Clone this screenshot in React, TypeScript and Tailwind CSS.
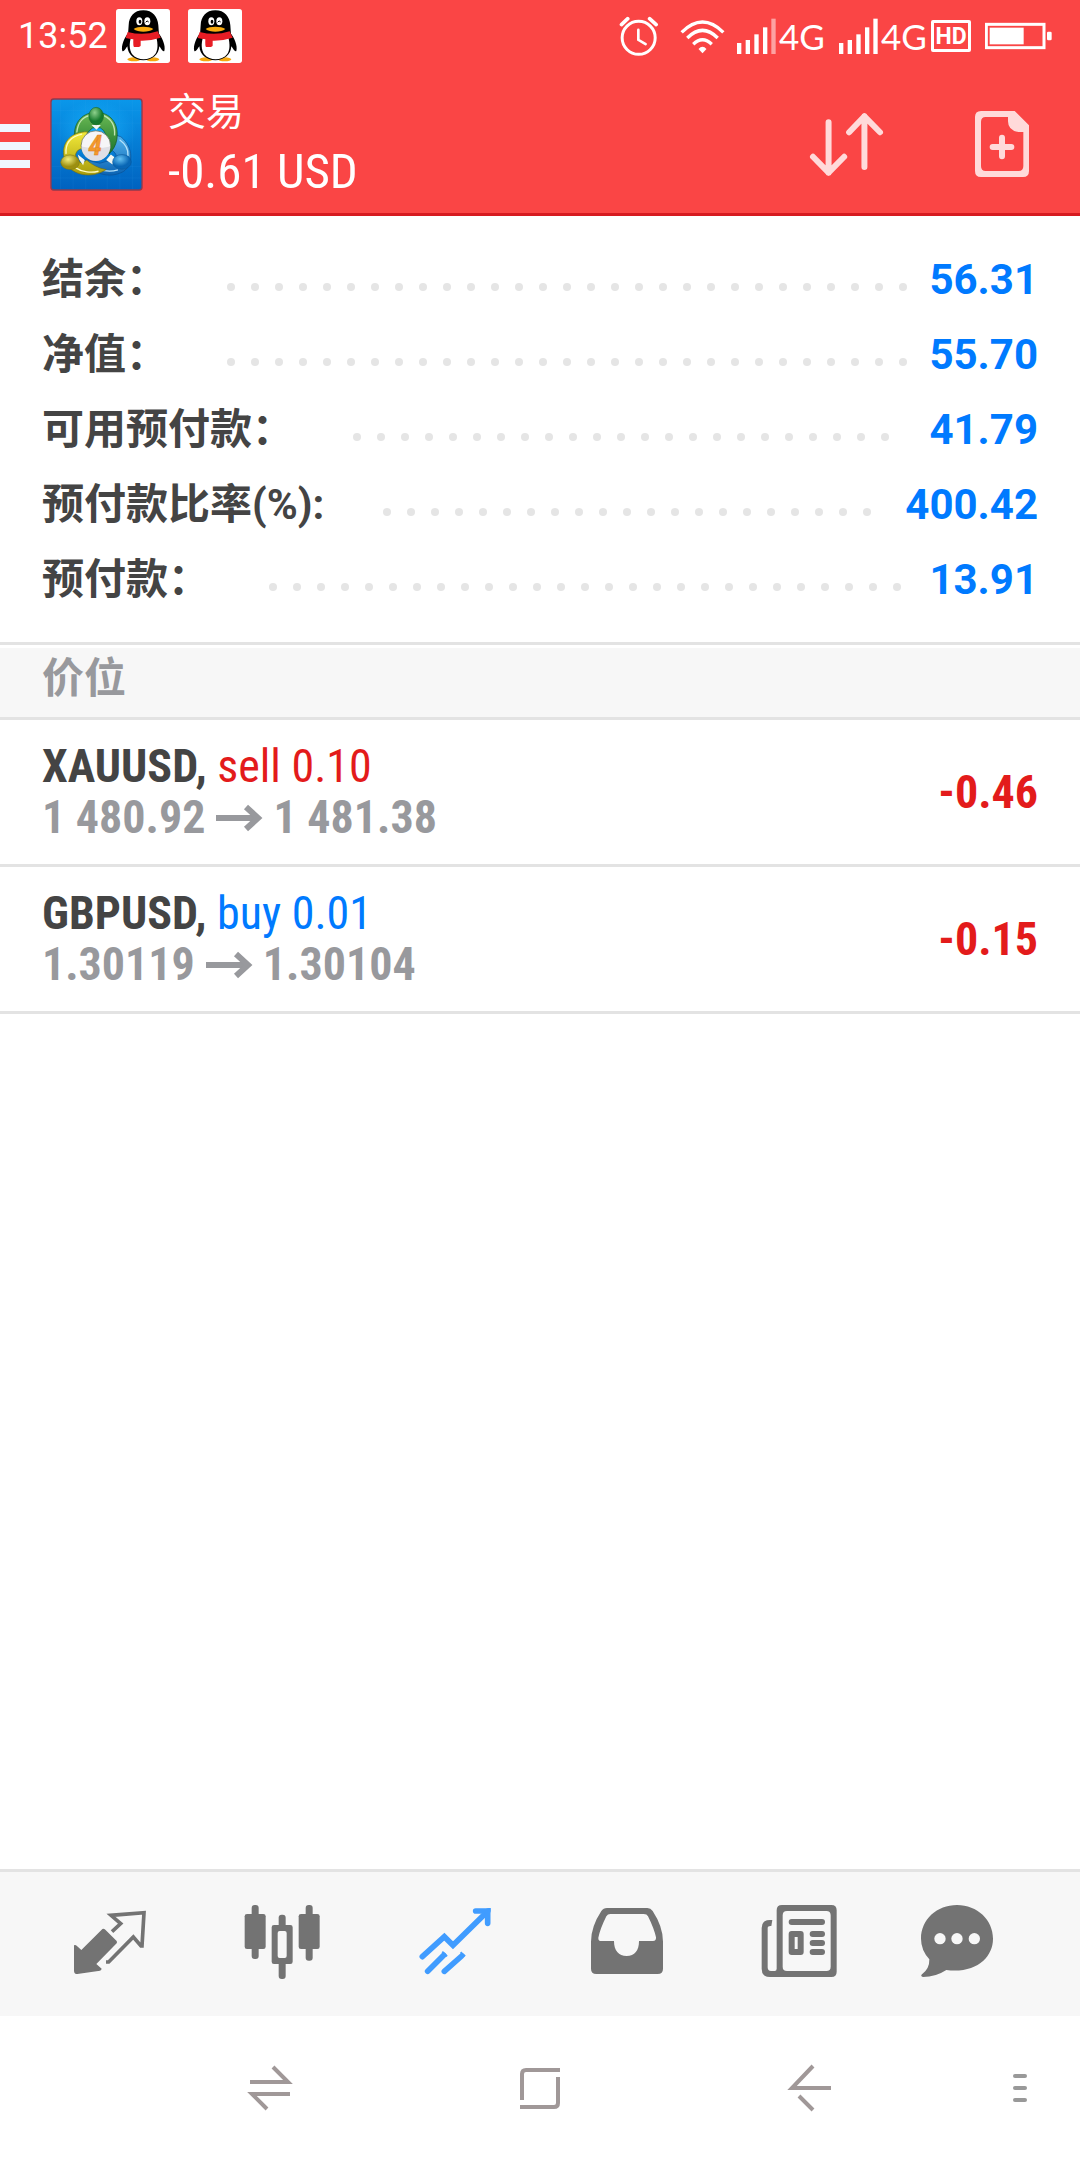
import React from "react";

const cjk = "font-['Roboto','Noto_Sans_CJK_SC',sans-serif]";
const condensed = "font-['Roboto_Condensed','Roboto',sans-serif]";

function Penguin() {
  return (
    <svg viewBox="348 27 162 162" className="size-[54px] shrink-0" aria-label="QQ">
      <rect x="348" y="27" width="162" height="162" rx="8" fill="#fff" />
      <ellipse cx="402" cy="178" rx="20" ry="6" fill="#f6a80f" />
      <ellipse cx="458" cy="178" rx="20" ry="6" fill="#f6a80f" />
      <path d="M384 100 C374 112 362 138 367 153 C371 157 377 146 382 139 C384 164 402 180 430 181 C458 180 476 164 478 139 C483 146 489 157 493 153 C498 138 486 112 476 100 Z" fill="#000" />
      <path d="M430 31 C402 31 387 50 386 76 L384 104 L477 104 L475 76 C473 50 458 31 430 31 Z" fill="#000" />
      <path d="M393 112 C387 132 388 150 396 162 C405 173 418 178 431 178 C444 178 457 173 466 162 C474 150 474 132 469 112 Z" fill="#fff" />
      <path d="M383 96 Q430 108 473 94 L482 113 Q450 123 422 122 V137 Q421 140 416 141 L402 141 Q399 139 400 118 Q388 117 377 114 Z" fill="#e71d25" />
      <ellipse cx="418" cy="64" rx="9" ry="12" fill="#fff" />
      <ellipse cx="442" cy="64" rx="9" ry="12" fill="#fff" />
      <ellipse cx="420" cy="65" rx="4" ry="6" fill="#000" />
      <path d="M437 67 Q441 59 446 66" fill="none" stroke="#000" strokeWidth="3" />
      <path d="M401 87 C412 78 448 78 460 87 C448 97 414 98 401 87 Z" fill="#f9ab10" />
    </svg>
  );
}

function AppLogo() {
  return (
    <svg viewBox="29 23 278 278" className="ml-5 size-[93px] shrink-0" aria-label="MetaTrader 4">
      <defs>
        <linearGradient id="sky" x1="0" y1="0" x2="0" y2="1">
          <stop offset="0" stopColor="#0a97ea" />
          <stop offset="1" stopColor="#0062bf" />
        </linearGradient>
        <radialGradient id="glow">
          <stop offset="0" stopColor="#19b4ff" stopOpacity=".8" />
          <stop offset="1" stopColor="#19b4ff" stopOpacity="0" />
        </radialGradient>
        <linearGradient id="green" x1="0" y1="0" x2="0" y2="1">
          <stop offset="0" stopColor="#6dbb55" />
          <stop offset="1" stopColor="#1b7329" />
        </linearGradient>
        <linearGradient id="yellow" x1="0" y1="0" x2="0" y2="1">
          <stop offset="0" stopColor="#f3ea3a" />
          <stop offset="1" stopColor="#a89c0c" />
        </linearGradient>
        <linearGradient id="blue" x1="0" y1="0" x2="0" y2="1">
          <stop offset="0" stopColor="#53b4ec" />
          <stop offset="1" stopColor="#0b63b4" />
        </linearGradient>
        <radialGradient id="greenHead" cx=".4" cy=".3">
          <stop offset="0" stopColor="#8ed08c" />
          <stop offset="1" stopColor="#177a2c" />
        </radialGradient>
        <radialGradient id="yellowHead" cx=".4" cy=".3">
          <stop offset="0" stopColor="#f4ee7c" />
          <stop offset="1" stopColor="#9c8f10" />
        </radialGradient>
        <radialGradient id="blueHead" cx=".4" cy=".3">
          <stop offset="0" stopColor="#63c0f2" />
          <stop offset="1" stopColor="#0866b5" />
        </radialGradient>
      </defs>
      <rect x="30" y="24" width="276" height="276" rx="10" fill="#8e3a4e" />
      <rect x="34" y="28" width="268" height="268" rx="7" fill="url(#sky)" />
      <ellipse cx="167" cy="120" rx="120" ry="90" fill="url(#glow)" />
      <path d="M60 28V296M98 28V296M136 28V296M200 28V296M238 28V296M276 28V296M34 60H302M34 98H302M34 228H302M34 262H302" stroke="#4fb4f5" strokeOpacity=".18" strokeWidth="1.5" />
      <path d="M128 206 C155 250 205 266 248 243 C277 224 281 172 241 139 L226 134 Q222 160 212 178 Q232 190 226 205 L178 218 Z" fill="url(#blue)" stroke="#0b4f93" strokeWidth="2" />
      <path d="M147 218 C174 240 205 246 232 238 M237 148 C256 162 264 180 262 196" fill="none" stroke="#b4e1fa" strokeWidth="4" />
      <path d="M102 145 C98 91 130 66 167 66 C207 66 236 96 229 146 C226 164 218 178 206 190 L197 135 Q190 116 179 112 L157 112 Q138 125 133 147 Z" fill="url(#green)" stroke="#14561f" strokeWidth="2" />
      <path d="M109 126 C112 96 128 80 145 76 M190 76 C212 86 224 108 222 135" fill="none" stroke="#c2e5b2" strokeWidth="4" />
      <path d="M141 124 C94 124 65 153 70 194 C76 237 112 258 160 252 C175 249 187 243 197 237 C173 233 153 222 139 209 L124 218 Q106 211 105 192 Q111 174 128 174 Z" fill="url(#yellow)" stroke="#77700c" strokeWidth="2" />
      <path d="M77 190 C74 158 92 138 125 131 M106 232 C125 245 153 247 174 242" fill="none" stroke="#fffbc0" strokeWidth="4" />
      <path d="M153 104 H181 L168 118 Z M116 207 L112 192 L133 208 L128 224 Z M211 192 L222 200 L216 222 L197 208 Z" fill="#f2f7f2" />
      <ellipse cx="167" cy="77" rx="22" ry="26" fill="url(#greenHead)" stroke="#145e20" strokeWidth="1.5" />
      <ellipse cx="89" cy="215" rx="28" ry="22" fill="url(#yellowHead)" stroke="#7b7210" strokeWidth="1.5" />
      <ellipse cx="244" cy="214" rx="28" ry="22" fill="url(#blueHead)" stroke="#075393" strokeWidth="1.5" />
      <circle cx="166" cy="165" r="44" fill="#f6f5f7" stroke="#57634d" strokeWidth="2" />
      <path d="M123 168 A43 43 0 0 0 209 168 Q166 178 123 168" fill="#dfdfe5" />
      <text x="164" y="192" textAnchor="middle" fontSize="84" fontWeight="700" fontStyle="italic" fill="#f39a2c" stroke="#dd7420" strokeWidth="1" className={condensed}>4</text>
    </svg>
  );
}

function Signal({ weak }: { weak?: boolean }) {
  return (
    <svg viewBox="0 0 117 108" className="h-9 w-[39px] shrink-0" fill="#fff" aria-hidden="true">
      <rect x="0" y="75" width="13" height="33" />
      <rect x="26" y="66" width="13" height="42" />
      <rect x="52" y="49" width="13" height="59" />
      <rect x="78" y="28" width="13" height="80" />
      <rect x="103" y="2" width="13" height="106" opacity={weak ? 0.5 : 1} />
    </svg>
  );
}

function StatusBar() {
  return (
    <div className="flex h-[72px] items-center justify-between pl-[18px] pr-7 text-white">
      <div className="flex items-center">
        <span className="text-4xl">13:52</span>
        <div className="ml-2 flex gap-[18px]">
          <Penguin />
          <Penguin />
        </div>
      </div>
      <div className="flex items-center">
        <svg viewBox="58 46 120 124" className="h-[41px] w-10" fill="none" stroke="#fff" strokeLinecap="round" aria-label="Alarm">
          <circle cx="117" cy="112" r="50" strokeWidth="9" />
          <path d="M65 72 L84 54 M150 54 L170 72" strokeWidth="11" />
          <path d="M116 88 V118 L138 131" strokeWidth="8" />
        </svg>
        <svg viewBox="238 48 136 114" className="ml-[21px] h-[38px] w-[45px]" fill="none" stroke="#fff" strokeWidth="10" aria-label="Wi-Fi">
          <path d="M243 94 Q306 32 369 94" />
          <path d="M260 111 Q306 65 352 111" />
          <path d="M278 130 Q306 103 334 130" />
          <path d="M294 144 Q306 131 318 144 L306 157 Z" fill="#fff" stroke="none" />
        </svg>
        <div className="ml-3 flex items-center gap-[3px]">
          <Signal weak />
          <span className="w-[43px] font-['Lato'] text-[35px] leading-9">4G</span>
        </div>
        <div className="ml-[17px] flex items-center gap-[3px]">
          <Signal />
          <span className="w-[43px] font-['Lato'] text-[35px] leading-9">4G</span>
        </div>
        <span className="ml-[7px] flex h-8 w-10 items-center justify-center rounded-[2px] border-[3px] border-white text-[23px] font-bold leading-none">HD</span>
        <svg viewBox="1156 66 201 84" className="ml-3.5 h-7 w-[67px]" aria-label="Battery">
          <rect x="1160" y="73" width="173" height="70" fill="none" stroke="#fff" strokeWidth="9" />
          <rect x="1170" y="83" width="102" height="50" fill="#fff" />
          <rect x="1342" y="95" width="14" height="26" rx="4" fill="#fff" />
        </svg>
      </div>
    </div>
  );
}

function Header() {
  return (
    <header className="border-b-[3px] border-[#d61a20] bg-[#fa4545]">
      <StatusBar />
      <div className="flex h-[141px] items-center pt-[3px]">
        <button aria-label="Menu" className="flex w-[30px] flex-col gap-2.5 pt-1">
          <span className="h-2 bg-[#f0f6ff]" />
          <span className="h-2 bg-[#f0f6ff]" />
          <span className="h-2 bg-[#f0f6ff]" />
        </button>
        <AppLogo />
        <div className="ml-[25px] flex-1 pb-[5px] text-white">
          <h1 className="text-[38px] leading-[60px]">交易</h1>
          <p className={`${condensed} text-[49px] leading-[60px]`}>-0.61 USD</p>
        </div>
        <button aria-label="Sort">
          <svg viewBox="622 330 232 200" className="h-[67px] w-[77px]" fill="none" stroke="#ffdada" strokeWidth="18" strokeLinecap="round" strokeLinejoin="round">
            <path d="M684 363 V515 M637 467 L684 515 L731 467" />
            <path d="M792 498 V345 M746 393 L792 345 L839 393" />
          </svg>
        </button>
        <button aria-label="New order" className="ml-[89px] mr-[50px]">
          <svg viewBox="1122 330 168 204" className="h-[68px] w-14">
            <path d="M1143 333 H1244 L1287 376 V513 Q1287 531 1269 531 H1143 Q1125 531 1125 513 V351 Q1125 333 1143 333 Z M1157 351 Q1143 351 1143 366 V498 Q1143 513 1157 513 H1256 Q1270 513 1270 498 V396 H1256 Q1224 392 1224 364 V351 Z" fill="#ffdada" fillRule="evenodd" />
            <path d="M1206 413 V469 M1178 441 H1234" stroke="#ffdada" strokeWidth="18" strokeLinecap="round" />
          </svg>
        </button>
      </div>
    </header>
  );
}

const summary = [
  { label: "结余：", value: "56.31" },
  { label: "净值：", value: "55.70" },
  { label: "可用预付款：", value: "41.79" },
  { label: "预付款比率(%):", value: "400.42" },
  { label: "预付款：", value: "13.91" },
];

function Leader() {
  return (
    <div className="ml-[59px] mr-5 mt-3.5 flex h-2 flex-1 flex-wrap gap-4 overflow-hidden" aria-hidden="true">
      {Array.from({ length: 120 }, (_, i) => (
        <span key={i} className="size-2 rounded-full bg-[#e5e5e5]" />
      ))}
    </div>
  );
}

function Summary() {
  return (
    <dl className="px-[42px] pb-[25px] pt-[26px] text-[42px] font-bold leading-[75px]">
      {summary.map((row) => (
        <div key={row.label} className="flex items-center">
          <dt className="text-[#444]">{row.label}</dt>
          <Leader />
          <dd className="text-[#007aff]">{row.value}</dd>
        </div>
      ))}
    </dl>
  );
}

const positions = [
  { symbol: "XAUUSD,", side: "sell 0.10", buy: false, open: "1 480.92", now: "1 481.38", profit: "-0.46" },
  { symbol: "GBPUSD,", side: "buy 0.01", buy: true, open: "1.30119", now: "1.30104", profit: "-0.15" },
];

function Positions() {
  return (
    <section>
      <div className="border-y-[3px] border-[#e3e3e3]">
        <h2 className="border-t-[3px] border-white bg-[#f7f7f7] px-[42px] pb-[7px] text-[42px] font-bold leading-[62px] text-[#98999d]">
          价位
        </h2>
      </div>
      <ul>
        {positions.map((p) => (
          <li key={p.symbol} className={`${condensed} flex items-center justify-between border-b-[3px] border-[#e3e3e3] px-[42px] py-[21px] text-[46px] leading-[51px]`}>
            <div>
              <div>
                <span className="font-bold text-[#444]">{p.symbol}</span>{" "}
                <span className={p.buy ? "text-[#007aff]" : "text-[#e31b1b]"}>{p.side}</span>
              </div>
              <div className="flex items-center font-bold text-[#98999d]">
                {p.open}
                <svg viewBox="0 0 48 30" className="mx-2.5 h-[30px] w-12" fill="none" stroke="currentColor" strokeWidth="6" aria-label="to">
                  <path d="M1 15 H42" />
                  <path d="M31 4 L43 15 L31 26" />
                </svg>
                {p.now}
              </div>
            </div>
            <span className="font-bold text-[#e31b1b]">{p.profit}</span>
          </li>
        ))}
      </ul>
    </section>
  );
}

const tabIcon = "size-20 shrink-0";

function Tabs() {
  return (
    <nav className="grid h-[147px] grid-cols-[173fr_173fr_173fr_173fr_173fr_143fr] items-center justify-items-center border-t-[3px] border-[#e3e3e3] bg-[#f7f7f7] pl-6 pr-[52px] text-[#737373]">
      <button aria-label="Quotes">
        <svg viewBox="90 132 240 240" className={tabIcon} fill="currentColor">
          <path d="M190 206 Q193 206 196 209 L230 243 Q232 247 230 250 L169 312 L185 326 Q184 330 180 332 L112 342 Q102 342 102 332 V256 Q106 254 110 257 L124 270 L185 209 Q187 206 190 206 Z" />
          <path d="M216 215 L242 191 L213 166 L312 158 L306 258 H303 L280 231 L206 306 H198" fill="none" stroke="currentColor" strokeWidth="11" />
        </svg>
      </button>
      <button aria-label="Charts">
        <svg viewBox="604 132 240 240" className={tabIcon} fill="currentColor">
          <rect x="633" y="135" width="21" height="162" rx="9" />
          <rect x="612" y="162" width="63" height="105" rx="7" />
          <rect x="795" y="135" width="21" height="167" rx="9" />
          <rect x="774" y="162" width="63" height="105" rx="7" />
          <rect x="714" y="164" width="21" height="40" rx="9" />
          <rect x="714" y="300" width="21" height="57" rx="9" />
          <path d="M700 195 H749 Q756 195 756 202 V305 Q756 312 749 312 H700 Q693 312 693 305 V202 Q693 195 700 195 Z M717 213 Q711 213 711 219 V288 Q711 294 717 294 H732 Q738 294 738 288 V219 Q738 213 732 213 Z" fillRule="evenodd" />
        </svg>
      </button>
      <button aria-label="Trade" className="text-[#409cff]">
        <svg viewBox="1120 132 240 240" className={tabIcon} fill="none" stroke="currentColor" strokeWidth="17" strokeLinecap="round">
          <path d="M1142 290 L1208 230 L1234 256 L1338 154" />
          <path d="M1302 153 H1338 V190" />
          <path d="M1338 144 H1347 V153 Z" fill="currentColor" stroke="none" />
          <path d="M1158 334 L1206 286 M1208 334 L1260 288" />
          <path d="M1204 277 L1214 287 M1259 279 L1268 287" strokeWidth="6" strokeLinecap="square" />
        </svg>
      </button>
      <button aria-label="History">
        <svg viewBox="141 132 240 240" className={tabIcon} fill="currentColor">
          <path d="M201 144 H322 Q332 144 338 153 Q369 200 369 245 V326 Q369 342 353 342 H169 Q153 342 153 326 V245 Q153 200 184 153 Q190 144 201 144 Z M211 162 Q203 162 199 169 Q181 205 175 233 Q174 243 184 243 H222 C222 272 236 288 260 288 C284 288 297 272 297 243 H339 Q349 243 348 232 Q342 205 324 169 Q321 162 311 162 Z" fillRule="evenodd" />
        </svg>
      </button>
      <button aria-label="News">
        <svg viewBox="661 132 240 240" className={tabIcon} fill="currentColor">
          <path d="M730 135 H878 Q894 135 894 151 V335 Q894 351 878 351 H694 Q669 351 669 326 V204 Q669 180 694 180 H701 L698 198 Q687 197 687 204 V322 Q687 333 697 333 H708 Q714 333 714 326 V151 Q714 135 730 135 Z M745 153 Q732 153 732 166 V320 Q732 333 745 333 H863 Q876 333 876 320 V166 Q876 153 863 153 Z" fillRule="evenodd" />
          <rect x="750" y="177" width="109" height="18" rx="9" />
          <path d="M759 213 H786 Q795 213 795 222 V276 Q795 285 786 285 H759 Q750 285 750 276 V222 Q750 213 759 213 Z M768 231 V267 H777 V231 Z" fillRule="evenodd" />
          <rect x="813" y="213" width="46" height="18" rx="9" />
          <rect x="813" y="240" width="46" height="18" rx="9" />
          <rect x="813" y="267" width="46" height="18" rx="9" />
        </svg>
      </button>
      <button aria-label="Messages">
        <svg viewBox="1134 132 240 240" className={tabIcon} fill="currentColor">
          <path d="M1254 135 C1315 135 1362 180 1362 236 C1362 292 1312 341 1222 330 Q1190 351 1152 351 Q1143 348 1149 343 Q1172 326 1171 298 Q1146 270 1146 236 C1146 178 1194 135 1254 135 Z" />
          <circle cx="1203" cy="236" r="17" fill="#f7f7f7" />
          <circle cx="1254" cy="236" r="17" fill="#f7f7f7" />
          <circle cx="1306" cy="236" r="17" fill="#f7f7f7" />
        </svg>
      </button>
    </nav>
  );
}

function SystemNav() {
  return (
    <nav className="grid h-36 grid-cols-[405fr_270fr_270fr_135fr] items-center text-[#a09898]">
      <button aria-label="Switch" className="ml-auto mr-[111px]">
        <svg viewBox="0 0 48 48" className="size-12" fill="none" stroke="currentColor" strokeWidth="4">
          <path d="M4 18 H42 L27 3 M44 30 H6 L21 45" />
        </svg>
      </button>
      <button aria-label="Home" className="mx-auto">
        <svg viewBox="0 0 48 48" className="size-12" fill="none" stroke="currentColor" strokeWidth="4">
          <path d="M44 6 H10 Q6 6 6 10 V36 M42 13 V39 Q42 43 38 43 H4" />
        </svg>
      </button>
      <button aria-label="Back" className="mx-auto">
        <svg viewBox="0 0 48 48" className="size-12" fill="none" stroke="currentColor" strokeWidth="4">
          <path d="M45 24 H6 L27 2 M13 32 L27 46" />
        </svg>
      </button>
      <button aria-label="More" className="mx-auto flex w-12 flex-col items-center gap-2 pl-3.5">
        <span className="h-1 w-3.5 rounded-full bg-[#999]" />
        <span className="h-1 w-3.5 rounded-full bg-[#999]" />
        <span className="h-1 w-3.5 rounded-full bg-[#999]" />
      </button>
    </nav>
  );
}

export default function App() {
  return (
    <div className={`${cjk} flex min-h-screen flex-col bg-white`}>
      <Header />
      <main className="flex-1">
        <Summary />
        <Positions />
      </main>
      <footer>
        <Tabs />
        <SystemNav />
      </footer>
    </div>
  );
}
